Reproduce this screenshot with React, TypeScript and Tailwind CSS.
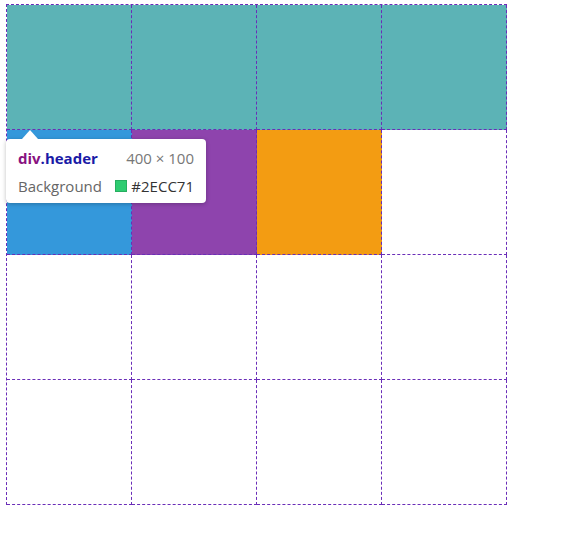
import React from 'react';

const cells = [
  'bg-[#5cb3b6]', 'bg-[#5cb3b6]', 'bg-[#5cb3b6]', 'bg-[#5cb3b6]',
  'bg-[#3498db]', 'bg-[#8e44ad]', 'bg-[#f39c12]', 'bg-white',
  'bg-white', 'bg-white', 'bg-white', 'bg-white',
  'bg-white', 'bg-white', 'bg-white', 'bg-white',
];

function Tooltip() {
  return (
    <div className="absolute left-0 top-[135px] w-[200px] text-[15px] font-['Open_Sans',sans-serif]">
      {/* arrow */}
      <div className="absolute left-[16px] -top-[9px] h-0 w-0 border-x-[8px] border-b-[9px] border-x-transparent border-b-white" />
      <div className="rounded-[4px] bg-white px-3 pt-[9px] pb-[7px] shadow-[0_1px_4px_rgba(0,0,0,0.25)]">
        <div className="flex h-5 items-center justify-between leading-5">
          <span className="font-bold">
            <span className="text-[#881280]">div</span>
            <span className="text-[#1a1aa6]">.header</span>
          </span>
          <span className="text-[#777]">400 × 100</span>
        </div>
        <div className="mt-2 flex h-5 items-center justify-between leading-5">
          <span className="text-[#666]">Background</span>
          <span className="flex items-center gap-1 text-[#333]">
            <span className="h-3 w-3 border border-[#27ae60] bg-[#2ecc71]" />
            #2ECC71
          </span>
        </div>
      </div>
    </div>
  );
}

export default function App() {
  return (
    <div className="h-[535px] w-[573px] bg-white pl-[6px] pt-1">
      <div className="relative w-fit">
        <div className="grid grid-cols-[repeat(4,125px)] grid-rows-[repeat(4,125px)] border-l border-t border-dashed border-[#6a2db8]">
          {cells.map((c, i) => (
            <div key={i} className={`${c} border-b border-r border-dashed border-[#6a2db8]`} />
          ))}
        </div>
        <Tooltip />
      </div>
    </div>
  );
}
